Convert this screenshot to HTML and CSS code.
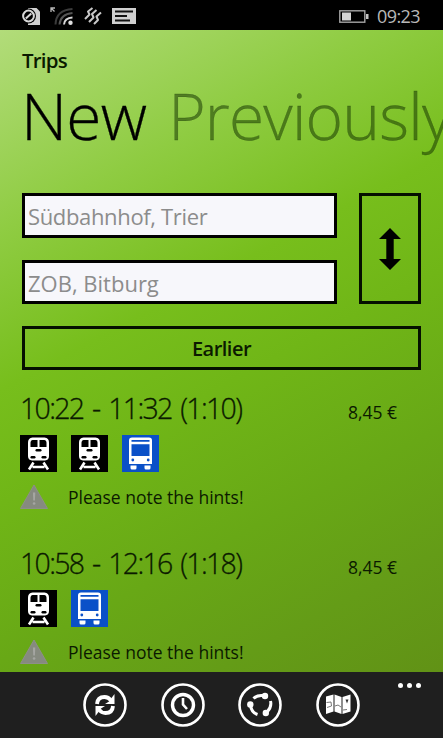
FILE: index.html
```html
<!DOCTYPE html>
<html lang="en">
<head>
  <meta charset="UTF-8">
  <title>Trips</title>
  <link rel="stylesheet" href="styles.css">
</head>
<body>

  <!-- shared icons -->
  <svg class="defs" width="0" height="0">
    <symbol id="train" viewBox="0 0 37 37">
      <rect width="37" height="37" fill="#000"/>
      <path d="M12.500 2.500h12q4.500.500 4.500 5v13.500q0 4-4 4.500h-13q-4-.5-4-4.500v-13.500q0-4.500 4.500-5z" fill="#fff"/>
      <path d="M12.500 5H17.500V12H10.500V7.500Q10.500 5 12.500 5zM19.500 5H24.500Q26.500 5 26.500 7.500V12H19.500z" fill="#000"/>
      <rect x="15.500" y="14" width="6" height="2.400" rx="1.200" fill="#000"/>
      <rect x="10.500" y="21" width="5" height="2.400" rx="1.200" fill="#000"/>
      <rect x="21.500" y="21" width="5" height="2.400" rx="1.200" fill="#000"/>
      <path d="M13.500 27.500L9 34.500M23.500 27.500L28 34.500M12.500 32H24.500" stroke="#fff" stroke-width="2.600" fill="none"/>
    </symbol>
    <symbol id="bus" viewBox="0 0 37 37">
      <rect width="37" height="37" fill="#0a50c8"/>
      <path d="M10 2.500H27Q30 2.500 30 5.500V29H7V5.500Q7 2.500 10 2.500z" fill="#fff"/>
      <path d="M9.500 5H27.500V6.800H9.500zM9.500 9.300H27.500V21H9.500z" fill="#0a50c8"/>
      <circle cx="10.800" cy="25" r="1.400" fill="#0a50c8"/>
      <circle cx="26.200" cy="25" r="1.400" fill="#0a50c8"/>
      <path d="M8.500 30.500H14.500V33Q14.500 34.500 13 34.500H10Q8.500 34.500 8.500 33zM22.500 30.500H28.500V33Q28.500 34.500 27 34.500H24Q22.500 34.500 22.500 33z" fill="#fff"/>
    </symbol>
    <symbol id="warning" viewBox="0 0 28 26">
      <path d="M14 1L27.500 24.500H.5z" fill="#868a80" stroke="#8d8f88" stroke-width="1" stroke-linejoin="round"/>
      <path d="M12.900 8.500h2.400l-.4 8h-1.600z" fill="#a5a6a2"/>
      <circle cx="14.100" cy="19.500" r="1.300" fill="#a5a6a2"/>
    </symbol>
  </svg>

  <div class="status-bar">
    <div class="status-icons">
      <svg width="18" height="18" viewBox="0 0 18 18">
        <path d="M6 1H14.500L18 4.500V18H6z" fill="#d0d0d0"/>
        <circle cx="6.500" cy="9" r="7.500" fill="#000"/>
        <circle cx="6.500" cy="9" r="5.400" fill="none" stroke="#d8d8d8" stroke-width="2"/>
        <path d="M3.800 11.500L9.300 6.500" stroke="#d8d8d8" stroke-width="2"/>
      </svg>
      <svg class="wifi" width="24" height="18" viewBox="0 0 24 18">
        <path d="M1 5V1H5M1 1L4.500 4.500" stroke="#b8b8b8" stroke-width="1.300" fill="none"/>
        <path d="M5.500 17.500Q6 3 22.500 2" stroke="#3c3c3c" stroke-width="2" fill="none"/>
        <path d="M9.500 17.500Q10.500 7 22.500 6" stroke="#555" stroke-width="2" fill="none"/>
        <path d="M14 17.500Q14.500 11 22.500 10.500" stroke="#d8d8d8" stroke-width="2" fill="none"/>
        <circle cx="20.500" cy="15.800" r="2.200" fill="#e0e0e0"/>
      </svg>
      <svg class="vibrate" width="18" height="18" viewBox="0 0 18 18">
        <path d="M8.500 1L4 4.500L5.500 7.500L1 12M12.500 3L8 7L9.500 10.500L5 15M17 5.500L12.500 9.500L14 13L10 17" stroke="#c8c8c8" stroke-width="2" fill="none" stroke-linejoin="round"/>
      </svg>
      <svg class="message" width="24" height="16" viewBox="0 0 24 16">
        <rect width="24" height="16" fill="#d0d0d0"/>
        <path d="M3 3.500H21M3 8H15M3 12.500H18" stroke="#111" stroke-width="1.800"/>
      </svg>
    </div>
    <svg class="battery" width="31" height="13" viewBox="0 0 31 13">
      <rect x=".8" y=".8" width="25" height="11.400" fill="none" stroke="#a5a5a5" stroke-width="1.400"/>
      <rect x="3" y="2.500" width="9" height="8" fill="#d5d5d5"/>
      <rect x="27" y="4" width="2.500" height="5" fill="#c5c5c5"/>
    </svg>
    <span class="clock">09:23</span>
  </div>

  <div class="page">
    <div class="app-title">Trips</div>
    <div class="pivot">
      <span class="pivot-item active">New</span>
      <span class="pivot-item">Previously</span>
    </div>

    <div class="search">
      <div class="fields">
        <div class="field from">Südbahnhof, Trier</div>
        <div class="field to">ZOB, Bitburg</div>
      </div>
      <button class="swap">
        <svg width="22" height="42" viewBox="0 0 22 42">
          <path d="M11 0L22 11H14.700V31H22L11 42L0 31H7.300V11H0z" fill="#000"/>
        </svg>
      </button>
    </div>
    <button class="earlier">Earlier</button>

    <div class="trip">
      <div class="trip-head">
        <span class="time">10:22 - 11:32 (1:10)</span>
        <span class="price">8,45 €</span>
      </div>
      <div class="lines">
        <svg><use href="#train"/></svg>
        <svg><use href="#train"/></svg>
        <svg><use href="#bus"/></svg>
      </div>
      <div class="hint">
        <svg><use href="#warning"/></svg>
        <span>Please note the hints!</span>
      </div>
    </div>

    <div class="trip">
      <div class="trip-head">
        <span class="time">10:58 - 12:16 (1:18)</span>
        <span class="price">8,45 €</span>
      </div>
      <div class="lines">
        <svg><use href="#train"/></svg>
        <svg><use href="#bus"/></svg>
      </div>
      <div class="hint">
        <svg><use href="#warning"/></svg>
        <span>Please note the hints!</span>
      </div>
    </div>
  </div>

  <div class="app-bar">
    <svg viewBox="0 0 44 44">
      <circle cx="22" cy="22" r="20.500" class="ring"/>
      <path d="M14 21Q14.500 14 21.500 14Q25.500 14 28 17.500M30 23Q29.500 30 22.500 30Q18.500 30 16 26.500" fill="none" stroke="#fff" stroke-width="3.800"/>
      <path d="M31.500 11V21H22L26 18.500L28.500 15zM12.500 33V23H22L18 25.500L15.500 29z" fill="#fff"/>
    </svg>
    <svg viewBox="0 0 44 44">
      <circle cx="22" cy="22" r="20.500" class="ring"/>
      <circle cx="22" cy="22" r="10.500" fill="none" stroke="#fff" stroke-width="3.400"/>
      <path d="M22 15V21.500L26 26" fill="none" stroke="#fff" stroke-width="2.600"/>
    </svg>
    <svg viewBox="0 0 44 44">
      <circle cx="22" cy="22" r="20.500" class="ring"/>
      <path d="M15.500 15.500Q19.500 11.500 26.500 12.800M32.500 18Q34 24 29 29M19.500 31.500Q13.500 29.500 12.500 22.500" fill="none" stroke="#fff" stroke-width="3"/>
      <circle cx="27" cy="13" r="3.200" fill="#fff"/>
      <circle cx="27.800" cy="30" r="3.200" fill="#fff"/>
      <circle cx="12.300" cy="21.500" r="3.200" fill="#fff"/>
    </svg>
    <svg viewBox="0 0 44 44">
      <circle cx="22" cy="22" r="20.500" class="ring"/>
      <path d="M10 13.500L17.500 11.500V28.500L10 31zM18.500 11.500L25.500 14V31L18.500 28.500zM26.500 14L34.500 11.500V28.500L26.500 31z" fill="#fff"/>
      <path d="M10.500 19.500L15 19L15.500 23L11 24.500M19 23L22 22L25 24M27 27L31 26.500" fill="none" stroke="#555" stroke-width=".8"/>
      <path d="M29.500 16.500H32.500L31 20.500z" fill="#333"/>
    </svg>
    <div class="more"><i></i><i></i><i></i></div>
  </div>

</body>
</html>
```
FILE: styles.css
```css
* {
  box-sizing: border-box;
}

body {
  margin: 0;
  width: 443px;
  height: 738px;
  overflow: hidden;
  display: flex;
  flex-direction: column;
  font-family: "Open Sans", "Noto Sans", sans-serif;
  color: #0b1a00;
  background: #000;
}

svg {
  display: block;
  flex: none;
}

.defs {
  position: absolute;
}

/* status bar */
.status-bar {
  height: 30px;
  flex: none;
  display: flex;
  align-items: center;
  padding: 2px 23px 0 22px;
  background: #000;
}

.status-icons {
  display: flex;
  align-items: center;
  flex: 1;
}

.wifi,
.vibrate,
.message {
  margin-left: 10px;
}

.battery {
  margin-right: 7px;
}

.clock {
  font-size: 18px;
  letter-spacing: -0.6px;
  color: #b8b8b8;
}

/* page */
.page {
  height: 642px;
  flex: none;
  overflow: hidden;
  padding: 15px 22px 0;
  background: linear-gradient(152deg, #b2dc7a 0%, #8fcc42 23%, #77be1c 41%, #70b617 54%, #68a816 72%, #649c17 86%, #619216 100%);
}

.app-title {
  height: 31px;
  line-height: 30px;
  font-size: 20.5px;
  font-weight: 600;
  letter-spacing: -0.8px;
}

.pivot {
  height: 117px;
  margin-left: -1px;
  line-height: 80px;
  display: flex;
  gap: 22px;
  white-space: nowrap;
  font-size: 64px;
  font-weight: 300;
}

.pivot-item {
  color: rgba(20, 50, 0, 0.52);
  letter-spacing: -0.8px;
  -webkit-text-stroke: 0.3px;
}

.pivot-item.active {
  color: #000;
}

.search {
  display: flex;
  gap: 22px;
}

.fields {
  width: 315px;
  display: flex;
  flex-direction: column;
  gap: 22px;
}

.field {
  height: 44.5px;
  line-height: 40px;
  padding-left: 3px;
  border: 3px solid #000;
  background: #f7f7fb;
  color: #8c8c8c;
  font-size: 22px;
}

.from {
  letter-spacing: -0.35px;
}

.swap,
.earlier {
  border: 3px solid #051000;
  background: none;
  padding: 0;
  font-family: inherit;
  color: inherit;
}

.swap {
  width: 62px;
  display: flex;
  align-items: center;
  justify-content: center;
}

.earlier {
  display: block;
  width: 399px;
  height: 44px;
  margin: 22px 0 21px;
  font-size: 20px;
  font-weight: 600;
  letter-spacing: -0.5px;
}

/* trips */
.trip {
  height: 155px;
  margin-left: -2px;
}

.trip-head {
  height: 44px;
  display: flex;
  justify-content: space-between;
  align-items: baseline;
  line-height: 34px;
}

.time {
  font-size: 28.5px;
  font-weight: 300;
  letter-spacing: -1.7px;
  word-spacing: 3px;
  white-space: nowrap;
  -webkit-text-stroke: 0.3px #0b1a00;
}

.price {
  width: 73px;
  font-size: 17.5px;
}

.lines {
  display: flex;
  gap: 14px;
}

.lines svg {
  width: 37px;
  height: 37px;
}

.hint {
  display: flex;
  align-items: center;
  gap: 20px;
  margin-top: 12px;
  height: 26px;
  font-size: 17.5px;
}

.hint svg {
  width: 28px;
  height: 26px;
}

/* app bar */
.app-bar {
  height: 66px;
  flex: none;
  display: flex;
  align-items: center;
  gap: 33.7px;
  padding-left: 83px;
  background: #1f1f1f;
}

.app-bar svg {
  width: 44px;
  height: 44px;
}

.ring {
  fill: none;
  stroke: #fff;
  stroke-width: 2.6;
}

.more {
  display: flex;
  gap: 4px;
  align-self: flex-start;
  margin: 11px 0 0 4px;
}

.more i {
  width: 5px;
  height: 5px;
  border-radius: 50%;
  background: #fff;
}
```
